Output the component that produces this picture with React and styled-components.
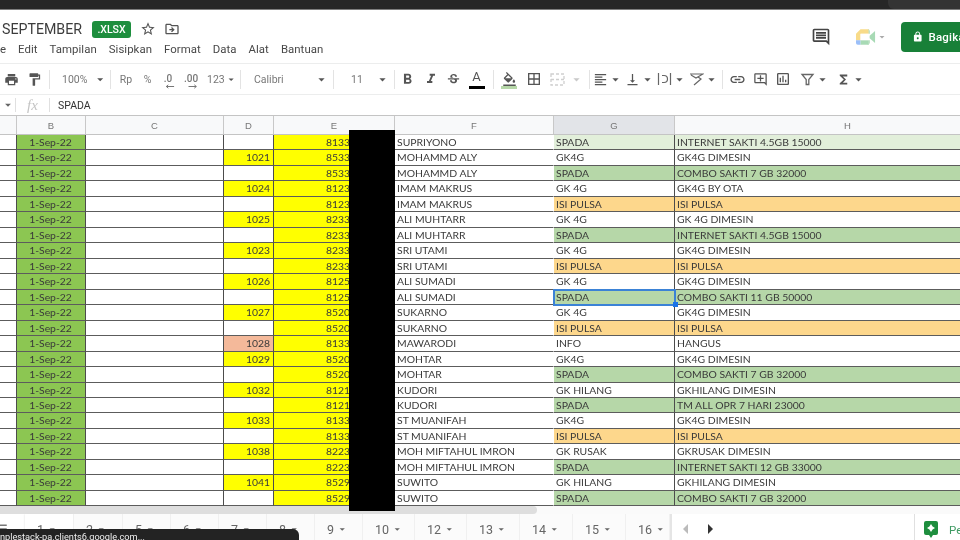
import React from 'react';
import styled, { createGlobalStyle } from 'styled-components';
import {
  MdPrint, MdFormatPaint, MdFormatBold, MdFormatItalic, MdStrikethroughS, MdFormatColorFill,
  MdBorderAll, MdFormatAlignLeft, MdVerticalAlignBottom, MdLink, MdOutlineAddComment,
  MdOutlineInsertChart, MdFunctions, MdStarBorder, MdOutlineDriveFileMove,
  MdOutlineComment, MdLock, MdArrowDropDown, MdArrowLeft, MdArrowRight, MdMenu,
} from 'react-icons/md';

const Global = createGlobalStyle`
  html, body { margin: 0; padding: 0; width: 960px; height: 540px; overflow: hidden; background: #fff; }
  * { box-sizing: border-box; }
`;

const COLS = '17px 69px 138px 50px 121px 159px 121px 346px';

const Page = styled.div`
  position: relative; width: 960px; height: 540px; overflow: hidden; display: flex; flex-direction: column;
  font-family: Roboto, "Liberation Sans", sans-serif; color: #444; background: #fff;
  filter: blur(0.45px);
`;
const BrowserBar = styled.div`
  height: 10px; flex: none; background: #262626; border-bottom: 1px solid #7d7d7d;
  display: flex; justify-content: flex-end;
`;
const BrowserEnd = styled.div`
  width: 72px; height: 9px; background: #343434; border-radius: 0 0 0 6px;
`;
const Header = styled.div`
  height: 53px; flex: none; display: flex; justify-content: space-between; align-items: center; overflow: hidden;
`;
const HeaderLeft = styled.div`
  display: flex; flex-direction: column; align-self: flex-start; padding-top: 10px;
`;
const TitleRow = styled.div`
  height: 18px; display: flex; align-items: center; padding-left: 2px; margin-bottom: 2px;
`;
const Title = styled.div`
  font-size: 14.2px; line-height: 17px; color: #3c3c3c; width: 90px;
`;
const Badge = styled.div`
  width: 39px; height: 17px; background: #1e8e3e; color: #fff; border-radius: 3px;
  font-size: 10.5px; font-weight: 500; display: flex; align-items: center; justify-content: center;
`;
const TitleIcons = styled.div`
  display: flex; align-items: center; gap: 8px; margin-left: 9px; color: #555; font-size: 16px;
`;
const TitleRight = styled.div`
  display: flex; align-items: center; margin-right: -12px;
`;
const CommentBtn = styled.div`
  display: flex; color: #444; font-size: 20px; margin-right: 25px;
`;
const MeetWrap = styled.div`
  display: flex; align-items: center; margin-right: 13px; color: #aaa; font-size: 12px;
`;
const ShareBtn = styled.div`
  width: 71px; height: 30px; background: #188038; color: #fff; border-radius: 4px; display: flex;
  align-items: center; padding-left: 11px; gap: 5px; font-size: 11.5px; font-weight: 500; letter-spacing: 0.2px; white-space: nowrap;
`;
const MenuRow = styled.div`
  height: 18px; display: flex; align-items: center; gap: 12px; margin-left: -12px;
  font-size: 11.4px; color: #484848; letter-spacing: 0.05px;
`;
const Toolbar = styled.div`
  height: 32px; flex: none; display: flex; align-items: center; border-top: 1px solid #eceded; border-bottom: 1px solid #eceded;
  font-size: 10px; color: #666;
`;
const Slot = styled.div`
  width: ${p => p.$w}px; flex: none; display: flex; align-items: center; justify-content: ${p => p.$left ? 'flex-start' : 'center'};
  padding-left: ${p => p.$pad || 0}px; height: 100%; color: ${p => p.$dim ? '#c9c9c9' : p.$c || '#555'}; font-size: ${p => p.$fs || 15}px;
  position: relative; white-space: nowrap;
`;
const TextItem = styled.span`
  font-size: ${p => p.$fs || 10.5}px; color: #777; width: ${p => p.$w ? `${p.$w}px` : 'auto'}; display: inline-block;
`;
const Sep = styled.div`
  width: 1px; height: 19px; background: #e3e3e3; flex: none; margin: 0 ${p => p.$m ?? 3}px;
`;
const ColorBar = styled.div`
  position: absolute; left: 50%; transform: translateX(-50%); bottom: 5px; width: 16px; height: 3px; background: ${p => p.$c};
`;
const Dec = styled.span`
  position: relative; font-size: 10px; color: #777; line-height: 12px; padding-bottom: 1px; font-weight: 500;
`;
const DecArrow = styled.svg`
  position: absolute; left: 50%; bottom: -3px; transform: translateX(-30%);
`;
const Letter = styled.span`
  font-size: 13px; line-height: 13px; margin-top: -5px; color: #555;
`;
const FormulaBar = styled.div`
  height: 20px; flex: none; display: flex; align-items: center; font-size: 10.5px; color: #333;
`;
const FxName = styled.div`
  width: 15px; display: flex; justify-content: flex-end; color: #666; font-size: 14px;
`;
const FxIcon = styled.div`
  width: 35px; height: 14px; border-left: 1px solid #e0e0e0; border-right: 1px solid #e0e0e0; margin-right: 8px;
  font-family: "Liberation Serif", serif; font-style: italic; font-size: 15px; color: #c4c4c4; display: flex; align-items: center; justify-content: center; line-height: 14px;
`;
const Head = styled.div`
  height: 20px; flex: none; display: grid; grid-template-columns: ${COLS};
  background: #f8f9fa; border-top: 1px solid #c4c4c4; border-bottom: 1px solid #c4c4c4;
`;
const HeadCell = styled.div`
  border-right: 1px solid #c8c8c8; font-size: 9.5px; color: #777; display: flex; align-items: center; justify-content: center;
  background: ${p => p.$sel ? '#e2e4e8' : 'transparent'}; font-family: "Liberation Sans", sans-serif;
`;
const Grid = styled.div`
  height: 371px; flex: none; overflow: hidden; display: grid; grid-auto-rows: 15.48px;
`;
const Row = styled.div`
  display: grid; grid-template-columns: ${COLS};
`;
const Cell = styled.div`
  position: relative; background: ${p => p.$bg || '#fff'}; border-bottom: 1px solid #5c5c5c; border-right: 1px solid ${p => p.$soft ? 'transparent' : '#4c4c4c'};
  font-family: Lato, "Liberation Sans", sans-serif; font-size: 10.4px; line-height: 14px; color: #3a3a3a;
  padding: 0 3px 0 2px; white-space: nowrap; overflow: ${p => p.$sel ? 'visible' : 'hidden'};
  text-align: ${p => p.$align || 'left'};
  ${p => p.$sel ? 'outline: 2px solid #3b82d6; outline-offset: -1px; z-index: 2;' : ''}
`;
const Masked = styled.span`
  margin-right: 41px;
`;
const Handle = styled.span`
  position: absolute; right: -4px; bottom: -3px; width: 5px; height: 5px; background: #1a73e8;
`;
const Redact = styled.div`
  position: absolute; left: 349px; top: 130px; width: 46px; height: 381px; background: #000; z-index: 5;
`;
const ScrollTrack = styled.div`
  height: 8px; flex: none; background: #fafafa; display: flex;
`;
const ScrollThumb = styled.div`
  width: 537px; height: 8px; background: #dedede; border-radius: 0 4px 4px 0;
`;
const TabBar = styled.div`
  height: 27px; flex: none; display: flex; background: #fff; position: relative; font-size: 12px; color: #777;
`;
const TabMenu = styled.div`
  width: 25px; display: flex; align-items: center; padding-top: 2px; color: #777; font-size: 18px; flex: none; overflow: hidden;
  svg { margin-left: -9px; }
`;
const Tab = styled.div`
  width: ${p => p.$w}px; flex: none; display: flex; align-items: center; padding: 4px 0 0 12px; gap: 2px; font-size: 12.5px; color: #666;
  border-right: 1px solid #f0f0f0; background: ${p => p.$on ? '#fff' : '#fbfbfb'};
  ${p => p.$on ? 'box-shadow: 0 0 2px #ddd;' : ''}
`;
const Arrows = styled.div`
  border-left: 2px solid #e5e5e5; display: flex; align-items: center; padding: 3px 0 0 2px; font-size: 24px; color: #333; flex: none;
`;
const SidePanel = styled.div`
  margin-left: auto; width: 46px; flex: none; border-left: 1px solid #e0e0e0; display: flex; align-items: center; padding: 4px 0 0 9px; gap: 11px;
  font-size: 11.5px; color: #3f9a63; overflow: hidden; white-space: nowrap;
  svg { flex: none; }
`;
const Tooltip = styled.div`
  position: absolute; left: 0; bottom: 0; width: 299px; height: 11px; background: #232323; color: #eee; border-radius: 0 6px 0 0;
  font-size: 9.2px; line-height: 16px; z-index: 6; overflow: hidden; white-space: nowrap;
`;

const G = '#b6d7a8', LG = '#e2efda', O = '#fdd78c', Y = '#ffff00', S = '#f4b99a';
const data = [
  ['', '8133', 'SUPRIYONO', 'SPADA', 'INTERNET SAKTI 4.5GB 15000', LG],
  ['1021', '8533', 'MOHAMMD ALY', 'GK4G', 'GK4G DIMESIN'],
  ['', '8533', 'MOHAMMD ALY', 'SPADA', 'COMBO SAKTI 7 GB 32000', G],
  ['1024', '8123', 'IMAM MAKRUS', 'GK 4G', 'GK4G BY OTA'],
  ['', '8123', 'IMAM MAKRUS', 'ISI PULSA', 'ISI PULSA', O],
  ['1025', '8233', 'ALI MUHTARR', 'GK 4G', 'GK 4G DIMESIN'],
  ['', '8233', 'ALI MUHTARR', 'SPADA', 'INTERNET SAKTI 4.5GB 15000', G],
  ['1023', '8233', 'SRI UTAMI', 'GK 4G', 'GK4G DIMESIN'],
  ['', '8233', 'SRI UTAMI', 'ISI PULSA', 'ISI PULSA', O],
  ['1026', '8125', 'ALI SUMADI', 'GK 4G', 'GK4G DIMESIN'],
  ['', '8125', 'ALI SUMADI', 'SPADA', 'COMBO SAKTI 11 GB 50000', G, true],
  ['1027', '8520', 'SUKARNO', 'GK 4G', 'GK4G DIMESIN'],
  ['', '8520', 'SUKARNO', 'ISI PULSA', 'ISI PULSA', O],
  ['1028', '8133', 'MAWARODI', 'INFO', 'HANGUS'],
  ['1029', '8520', 'MOHTAR', 'GK4G', 'GK4G DIMESIN'],
  ['', '8520', 'MOHTAR', 'SPADA', 'COMBO SAKTI 7 GB 32000', G],
  ['1032', '8121', 'KUDORI', 'GK HILANG', 'GKHILANG DIMESIN'],
  ['', '8121', 'KUDORI', 'SPADA', 'TM ALL OPR 7 HARI 23000', G],
  ['1033', '8133', 'ST MUANIFAH', 'GK4G', 'GK4G DIMESIN'],
  ['', '8133', 'ST MUANIFAH', 'ISI PULSA', 'ISI PULSA', O],
  ['1038', '8223', 'MOH MIFTAHUL IMRON', 'GK RUSAK', 'GKRUSAK DIMESIN'],
  ['', '8223', 'MOH MIFTAHUL IMRON', 'SPADA', 'INTERNET SAKTI 12 GB 33000', G],
  ['1041', '8529', 'SUWITO', 'GK HILANG', 'GKHILANG DIMESIN'],
  ['', '8529', 'SUWITO', 'SPADA', 'COMBO SAKTI 7 GB 32000', G],
];

const Caret = () => <MdArrowDropDown />;

const MeetIcon = () => (
  <svg width="20" height="16" viewBox="0 0 22 17">
    <path d="M0 5 L5 0 H14 V5 H5 V12 H0 Z" fill="#f6d26b" opacity="0.8" />
    <path d="M0 12 H5 V17 H2 Q0 17 0 15 Z" fill="#8ab4f8" opacity="0.85" />
    <path d="M5 12 H14 V17 H5 Z" fill="#a8dab5" />
    <path d="M14 0 V5 L15 5 V12 L14 12 V17 H12 Q15 17 15 15 V2 Q15 0 13 0 Z" fill="#9ed3a9" />
    <path d="M15 7 L21 2 V15 L15 10 Z" fill="#a8dab5" />
    <rect x="5" y="5" width="9" height="7" fill="#fff" />
  </svg>
);
const FilterIcon = () => (
  <svg width="15" height="15" viewBox="0 0 15 15" fill="none" stroke="#666" strokeWidth="1.3"><path d="M2 2.5 H13 L8.8 7.5 V12.5 H6.2 V7.5 Z" /></svg>
);
const MergeIcon = () => (
  <svg width="15" height="13" viewBox="0 0 15 13" fill="none" stroke="#cfcfcf" strokeWidth="1.3" strokeDasharray="3 2"><rect x="1" y="1" width="13" height="11" /><path d="M1 6.5 H14" /></svg>
);
const WrapIcon = () => (
  <svg width="15" height="14" viewBox="0 0 15 14" fill="none" stroke="#666" strokeWidth="1.2"><path d="M1.5 1 V13 M13.5 1 V13 M5 3.5 H7 A3.5 3.5 0 0 1 7 10.5 H5" /></svg>
);
const RotateIcon = () => (
  <svg width="15" height="14" viewBox="0 0 15 14" fill="none" stroke="#666" strokeWidth="1.2"><path d="M1 2 H14 L7 6 L2 3 M9 5 L12 7 L5 13" /></svg>
);
const ExploreIcon = () => (
  <svg width="14" height="17" viewBox="0 0 14 17"><path d="M2 0 H12 Q14 0 14 2 V12 Q14 14 12 14 H9 L7 17 L5 14 H2 Q0 14 0 12 V2 Q0 0 2 0 Z" fill="#1e8e3e" /><path d="M7 3 L8.6 5.4 L11 7 L8.6 8.6 L7 11 L5.4 8.6 L3 7 L5.4 5.4 Z" fill="#fff" /></svg>
);
const DecLeft = () => <DecArrow width="9" height="5" viewBox="0 0 9 5" fill="none" stroke="#777"><path d="M1 2.5 H9 M3 .8 L1 2.5 L3 4.2" /></DecArrow>;
const DecRight = () => <DecArrow width="9" height="5" viewBox="0 0 9 5" fill="none" stroke="#777"><path d="M0 2.5 H8 M6 .8 L8 2.5 L6 4.2" /></DecArrow>;

const columns = ['', 'B', 'C', 'D', 'E', 'F', 'G', 'H'];
const tabs = [['1', 49, true], ['2', 49], ['5', 48], ['6', 48], ['7', 48], ['8', 48], ['9', 48], ['10', 52], ['12', 52], ['13', 53], ['14', 53], ['15', 53], ['16', 44]];

export default function App() {
  return (
    <Page>
      <Global />
      <BrowserBar><BrowserEnd /></BrowserBar>
      <Header>
        <HeaderLeft>
          <TitleRow>
            <Title>SEPTEMBER</Title>
            <Badge>.XLSX</Badge>
            <TitleIcons><MdStarBorder /><MdOutlineDriveFileMove /></TitleIcons>
          </TitleRow>
          <MenuRow>
            <span>File</span><span>Edit</span><span>Tampilan</span><span>Sisipkan</span><span>Format</span><span>Data</span><span>Alat</span><span>Bantuan</span>
          </MenuRow>
        </HeaderLeft>
        <TitleRight>
          <CommentBtn><MdOutlineComment /></CommentBtn>
          <MeetWrap><MeetIcon /><MdArrowDropDown /></MeetWrap>
          <ShareBtn><MdLock />Bagikan</ShareBtn>
        </TitleRight>
      </Header>
      <Toolbar>
        <Slot $w={23}><MdPrint /></Slot>
        <Slot $w={23}><MdFormatPaint /></Slot>
        <Sep />
        <Slot $w={54} $left $pad={9}><TextItem $w={32}>100%</TextItem><Caret /></Slot>
        <Sep />
        <Slot $w={24}><TextItem>Rp</TextItem></Slot>
        <Slot $w={19}><TextItem>%</TextItem></Slot>
        <Slot $w={22}><Dec>.0<DecLeft /></Dec></Slot>
        <Slot $w={24}><Dec>.00<DecRight /></Dec></Slot>
        <Slot $w={34} $pad={4}><TextItem>123</TextItem><Caret /></Slot>
        <Sep />
        <Slot $w={86} $left $pad={10}><TextItem $w={60}>Calibri</TextItem><Caret /></Slot>
        <Sep />
        <Slot $w={57} $left $pad={14}><TextItem $w={24}>11</TextItem><Caret /></Slot>
        <Slot $w={1}><Sep $m={0} /></Slot>
        <Slot $w={24} $fs={17}><MdFormatBold /></Slot>
        <Slot $w={24} $fs={16}><MdFormatItalic /></Slot>
        <Slot $w={21}><MdStrikethroughS /></Slot>
        <Slot $w={25}><Letter>A</Letter><ColorBar $c="#000" /></Slot>
        <Sep $m={3.5} />
        <Slot $w={24}><MdFormatColorFill /><ColorBar $c="#b6d7a8" /></Slot>
        <Slot $w={25} $fs={16}><MdBorderAll /></Slot>
        <Slot $w={23}><MergeIcon /></Slot>
        <Slot $w={18} $dim $left><Caret /></Slot>
        <Sep $m={2} />
        <Slot $w={32}><MdFormatAlignLeft /><Caret /></Slot>
        <Slot $w={32}><MdVerticalAlignBottom /><Caret /></Slot>
        <Slot $w={32}><WrapIcon /><Caret /></Slot>
        <Slot $w={32}><RotateIcon /><Caret /></Slot>
        <Sep $m={2} />
        <Slot $w={24} $fs={17}><MdLink /></Slot>
        <Slot $w={22}><MdOutlineAddComment /></Slot>
        <Slot $w={24} $fs={16}><MdOutlineInsertChart /></Slot>
        <Slot $w={40}><FilterIcon /><Caret /></Slot>
        <Slot $w={32}><MdFunctions /><Caret /></Slot>
      </Toolbar>
      <FormulaBar>
        <FxName><MdArrowDropDown /></FxName>
        <FxIcon>fx</FxIcon>
        <span>SPADA</span>
      </FormulaBar>
      <Head>
        {columns.map((c, i) => <HeadCell key={i} $sel={c === 'G'}>{c}</HeadCell>)}
      </Head>
      <Grid>
        {data.map((r, i) => (
          <Row key={i}>
            <Cell />
            <Cell $bg="#8cc652" $align="center">1-Sep-22</Cell>
            <Cell />
            <Cell $bg={r[0] === '1028' ? S : r[0] ? Y : '#fff'} $align="right">{r[0]}</Cell>
            <Cell $bg={Y} $align="right" $soft><Masked>{r[1]}</Masked></Cell>
            <Cell $soft>{r[2]}</Cell>
            <Cell $bg={r[5]} $sel={r[6]}>{r[3]}{r[6] && <Handle />}</Cell>
            <Cell $bg={r[5]}>{r[4]}</Cell>
          </Row>
        ))}
      </Grid>
      <ScrollTrack><ScrollThumb /></ScrollTrack>
      <TabBar>
        <TabMenu><MdMenu /></TabMenu>
        {tabs.map(([t, w, on]) => <Tab key={t} $on={on} $w={w}>{t}<MdArrowDropDown /></Tab>)}
        <Arrows><MdArrowLeft color="#bbb" /><MdArrowRight /></Arrows>
        <SidePanel><ExploreIcon />Pelajari</SidePanel>
      </TabBar>
      <Tooltip>nplestack-pa.clients6.google.com...</Tooltip>
      <Redact />
    </Page>
  );
}
